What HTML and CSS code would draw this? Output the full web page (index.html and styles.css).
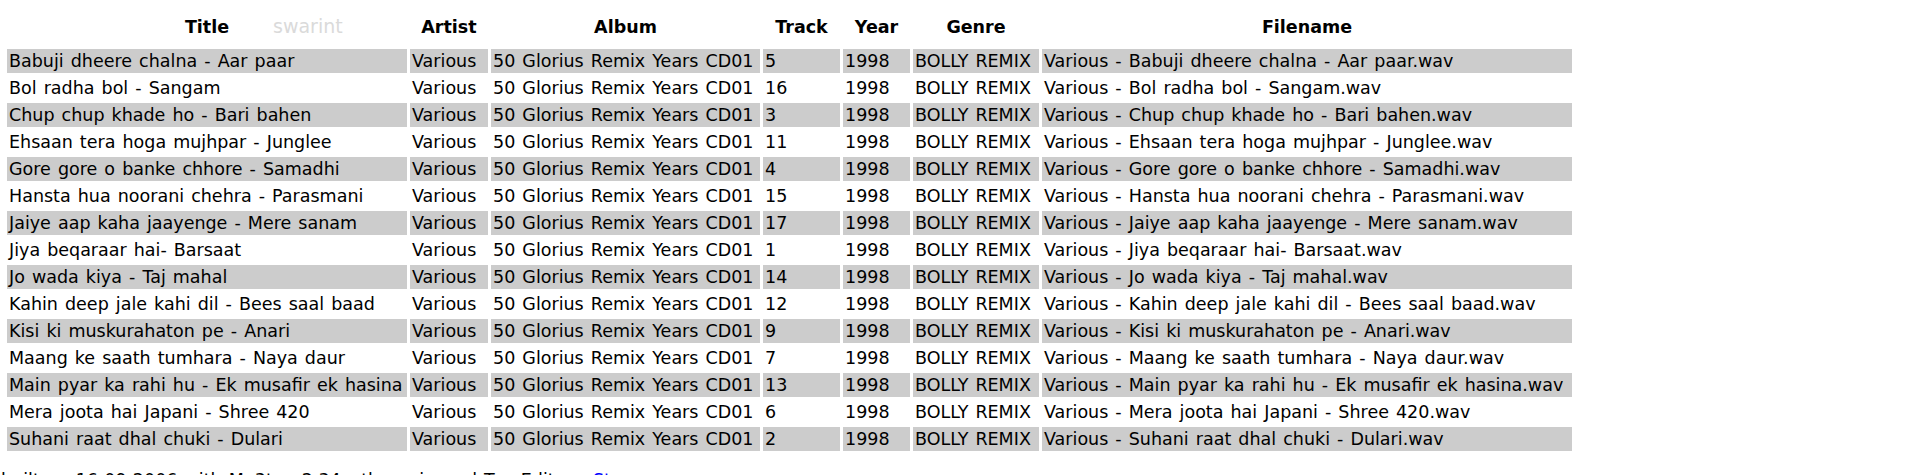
FILE: index.html
```html
<!DOCTYPE html>
<html>
<head>
<meta charset="utf-8">
<title>Playlist</title>
<link rel="stylesheet" href="styles.css">
</head>
<body>
<div class="page">
  <span class="watermark">swarint</span>
  <table class="tracks">
    <colgroup>
      <col class="c-title"><col class="c-artist"><col class="c-album"><col class="c-track"><col class="c-year"><col class="c-genre"><col class="c-file">
    </colgroup>
    <thead>
      <tr><th>Title</th><th>Artist</th><th>Album</th><th>Track</th><th>Year</th><th>Genre</th><th>Filename</th></tr>
    </thead>
    <tbody>
      <tr class="alt"><td>Babuji dheere chalna - Aar paar</td><td>Various</td><td>50 Glorius Remix Years CD01</td><td>5</td><td>1998</td><td>BOLLY REMIX</td><td>Various - Babuji dheere chalna - Aar paar.wav</td></tr>
      <tr><td>Bol radha bol - Sangam</td><td>Various</td><td>50 Glorius Remix Years CD01</td><td>16</td><td>1998</td><td>BOLLY REMIX</td><td>Various - Bol radha bol - Sangam.wav</td></tr>
      <tr class="alt"><td>Chup chup khade ho - Bari bahen</td><td>Various</td><td>50 Glorius Remix Years CD01</td><td>3</td><td>1998</td><td>BOLLY REMIX</td><td>Various - Chup chup khade ho - Bari bahen.wav</td></tr>
      <tr><td>Ehsaan tera hoga mujhpar - Junglee</td><td>Various</td><td>50 Glorius Remix Years CD01</td><td>11</td><td>1998</td><td>BOLLY REMIX</td><td>Various - Ehsaan tera hoga mujhpar - Junglee.wav</td></tr>
      <tr class="alt"><td>Gore gore o banke chhore - Samadhi</td><td>Various</td><td>50 Glorius Remix Years CD01</td><td>4</td><td>1998</td><td>BOLLY REMIX</td><td>Various - Gore gore o banke chhore - Samadhi.wav</td></tr>
      <tr><td>Hansta hua noorani chehra - Parasmani</td><td>Various</td><td>50 Glorius Remix Years CD01</td><td>15</td><td>1998</td><td>BOLLY REMIX</td><td>Various - Hansta hua noorani chehra - Parasmani.wav</td></tr>
      <tr class="alt"><td>Jaiye aap kaha jaayenge - Mere sanam</td><td>Various</td><td>50 Glorius Remix Years CD01</td><td>17</td><td>1998</td><td>BOLLY REMIX</td><td>Various - Jaiye aap kaha jaayenge - Mere sanam.wav</td></tr>
      <tr><td>Jiya beqaraar hai- Barsaat</td><td>Various</td><td>50 Glorius Remix Years CD01</td><td>1</td><td>1998</td><td>BOLLY REMIX</td><td>Various - Jiya beqaraar hai- Barsaat.wav</td></tr>
      <tr class="alt"><td>Jo wada kiya - Taj mahal</td><td>Various</td><td>50 Glorius Remix Years CD01</td><td>14</td><td>1998</td><td>BOLLY REMIX</td><td>Various - Jo wada kiya - Taj mahal.wav</td></tr>
      <tr><td>Kahin deep jale kahi dil - Bees saal baad</td><td>Various</td><td>50 Glorius Remix Years CD01</td><td>12</td><td>1998</td><td>BOLLY REMIX</td><td>Various - Kahin deep jale kahi dil - Bees saal baad.wav</td></tr>
      <tr class="alt"><td>Kisi ki muskurahaton pe - Anari</td><td>Various</td><td>50 Glorius Remix Years CD01</td><td>9</td><td>1998</td><td>BOLLY REMIX</td><td>Various - Kisi ki muskurahaton pe - Anari.wav</td></tr>
      <tr><td>Maang ke saath tumhara - Naya daur</td><td>Various</td><td>50 Glorius Remix Years CD01</td><td>7</td><td>1998</td><td>BOLLY REMIX</td><td>Various - Maang ke saath tumhara - Naya daur.wav</td></tr>
      <tr class="alt"><td>Main pyar ka rahi hu - Ek musafir ek hasina</td><td>Various</td><td>50 Glorius Remix Years CD01</td><td>13</td><td>1998</td><td>BOLLY REMIX</td><td>Various - Main pyar ka rahi hu - Ek musafir ek hasina.wav</td></tr>
      <tr><td>Mera joota hai Japani - Shree 420</td><td>Various</td><td>50 Glorius Remix Years CD01</td><td>6</td><td>1998</td><td>BOLLY REMIX</td><td>Various - Mera joota hai Japani - Shree 420.wav</td></tr>
      <tr class="alt"><td>Suhani raat dhal chuki - Dulari</td><td>Various</td><td>50 Glorius Remix Years CD01</td><td>2</td><td>1998</td><td>BOLLY REMIX</td><td>Various - Suhani raat dhal chuki - Dulari.wav</td></tr>
    </tbody>
  </table>
  <p class="footer">built on 16-09-2006 with Mp3tag 2.34 - the universal Tag Editor - <a href="#">Stamp</a></p>
</div>
</body>
</html>
```

FILE: styles.css
```css
html, body {
  margin: 0;
  padding: 0;
  background: #ffffff;
}

.page {
  position: relative;
  padding: 4px;
  font-family: "DejaVu Sans", Verdana, sans-serif;
  font-size: 17.5px;
  word-spacing: 1.5px;
  color: #000000;
}

.watermark {
  position: absolute;
  left: 273px;
  top: 14px;
  font-family: "DejaVu Sans", Verdana, sans-serif;
  font-size: 19px;
  word-spacing: 0;
  color: #dadada;
  line-height: 24px;
}

.tracks {
  border-collapse: separate;
  border-spacing: 3px;
  table-layout: fixed;
  width: 1571px;
}

.c-title { width: 400px; }
.c-artist { width: 78px; }
.c-album { width: 269px; }
.c-track { width: 77px; }
.c-year { width: 67px; }
.c-genre { width: 126px; }
.c-file { width: 530px; }

.tracks th {
  height: 39px;
  padding: 0;
  font-weight: bold;
  text-align: center;
  vertical-align: middle;
  line-height: 24px;
  word-spacing: 0;
}

.tracks td {
  height: 24px;
  padding: 0 0 0 2px;
  line-height: 24px;
  white-space: nowrap;
  overflow: hidden;
  text-align: left;
}

.tracks tr.alt td {
  background: #cccccc;
}

.footer {
  margin: 14px 0 0 -3px;
  line-height: 24px;
}

.footer a {
  color: #0000ff;
  text-decoration: none;
}
```
